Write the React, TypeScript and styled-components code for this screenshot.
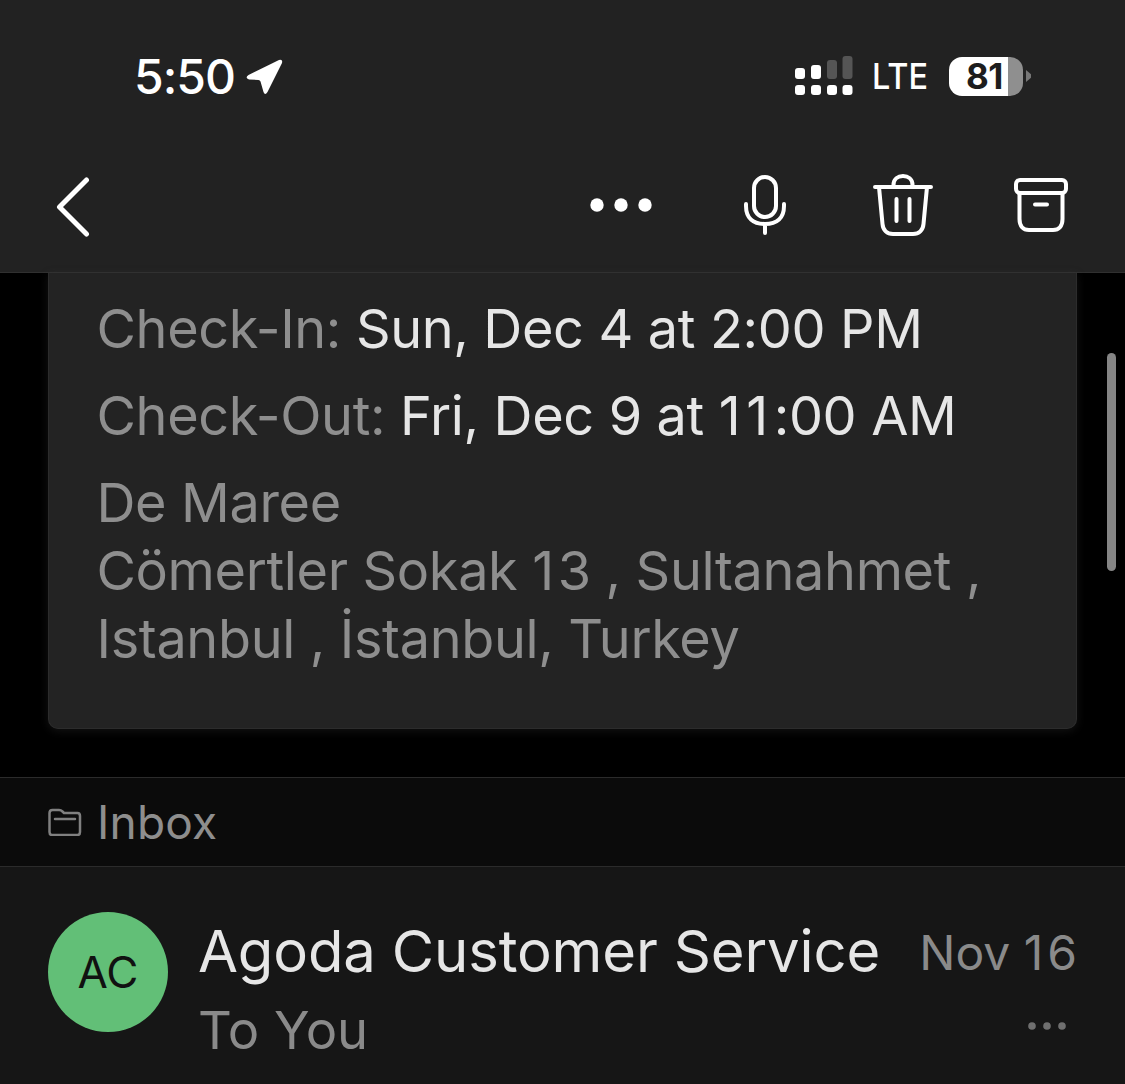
import React from 'react';
import styled, { createGlobalStyle } from 'styled-components';

const GlobalStyle = createGlobalStyle`
  html, body {
    margin: 0;
    padding: 0;
    background: #000;
    overflow: hidden;
  }
  * { box-sizing: border-box; }
`;

const Screen = styled.div`
  position: relative;
  width: 1125px;
  height: 1084px;
  overflow: hidden;
  background: #000;
  font-family: Inter, "Liberation Sans", sans-serif;
  display: flex;
  flex-direction: column;
`;

const Header = styled.header`
  height: 273px;
  flex: none;
  background: #222222;
  border-bottom: 1px solid #303030;
`;

const StatusBar = styled.div`
  height: 150px;
  padding: 51px 94px 0 134px;
  display: flex;
  justify-content: space-between;
  align-items: flex-start;
`;

const TimeGroup = styled.div`
  display: flex;
  align-items: center;
  gap: 9px;
`;

const Time = styled.span`
  color: #fff;
  font-size: 48px;
  font-weight: 500;
  line-height: 52px;
  letter-spacing: -1px;
`;

const StatusRight = styled.div`
  display: flex;
  align-items: center;
  height: 50px;
  gap: 20px;
`;

const Lte = styled.span`
  color: #fff;
  font-size: 36px;
  font-weight: 500;
  line-height: 50px;
  transform: scaleX(0.9);
  transform-origin: left center;
  width: 56px;
  margin-left: -1px;
  margin-right: 1px;
`;

const Battery = styled.div`
  display: flex;
  align-items: center;
  gap: 3px;
`;

const BatteryBody = styled.div`
  width: 74px;
  height: 39px;
  border-radius: 13px;
  background: linear-gradient(to right, #fff 0 79.7%, #8f8f8f 79.7% 100%);
  color: #1d1d1d;
  font-size: 35px;
  font-weight: 700;
  line-height: 39px;
  padding-left: 17px;
  letter-spacing: -0.5px;
  white-space: nowrap;
`;

const BatteryCap = styled.div`
  width: 5px;
  height: 12px;
  background: #777;
  clip-path: polygon(0 0, 100% 35%, 100% 65%, 0 100%);
`;

const Toolbar = styled.nav`
  height: 122px;
  padding: 0 57px 12px 56px;
  display: flex;
  align-items: center;
`;

const BackIcon = styled.svg`
  margin-top: 3px;
`;

const Actions = styled.div`
  margin-left: auto;
  display: flex;
  align-items: center;
`;

const ActionSlot = styled.div<{ $width: number }>`
  width: ${(p) => p.$width}px;
  display: flex;
  justify-content: flex-end;
  align-items: center;
`;

const Body = styled.main`
  flex: 1;
  display: flex;
  flex-direction: column;
`;

const Card = styled.section`
  margin: 0 48px;
  height: 456px;
  flex: none;
  padding: 22px 46px 0 47.5px;
  background: #232323;
  border: 1px solid #2c2c2c;
  border-top: 0;
  border-radius: 0 0 10px 10px;
  box-shadow: 0 2px 10px rgba(70, 70, 70, 0.28);
`;

const DetailLine = styled.div`
  font-size: 54px;
  font-weight: 400;
  line-height: 68px;
  margin-bottom: 19px;
  color: #8e8e8e;
  white-space: nowrap;
  letter-spacing: -0.35px;
`;

const Strong = styled.span`
  color: #e6e6e6;
`;

// the ones take more room in the reference font than in Inter
const Digits = styled.span<{ $spread: number }>`
  letter-spacing: ${(p) => p.$spread}px;
`;

const Address = styled(DetailLine)`
  margin-bottom: 0;
`;

const FolderBar = styled.div`
  margin-top: 48px;
  height: 90px;
  flex: none;
  padding-left: 48px;
  display: flex;
  align-items: center;
  gap: 15px;
  background: #0b0b0b;
  border-top: 1px solid #2b2b2b;
  border-bottom: 1px solid #2b2b2b;
`;

const FolderName = styled.span`
  color: #8e8e8e;
  font-size: 46px;
  font-weight: 400;
  line-height: 86px;
  letter-spacing: 0.2px;
`;

const SenderRow = styled.div`
  flex: 1;
  padding: 45px 48px 0;
  display: flex;
  align-items: flex-start;
  background: #161616;
`;

const Avatar = styled.div`
  width: 120px;
  height: 120px;
  flex: none;
  border-radius: 50%;
  background: #62bf77;
  color: #111;
  font-size: 44px;
  font-weight: 400;
  line-height: 120px;
  text-align: center;
`;

const SenderInfo = styled.div`
  flex: 1;
  margin-left: 30px;
`;

const SenderTop = styled.div`
  display: flex;
  justify-content: space-between;
  align-items: flex-start;
  margin-top: 3px;
`;

const SenderName = styled.span`
  color: #e6e6e6;
  font-size: 58px;
  font-weight: 400;
  line-height: 72px;
  white-space: nowrap;
  letter-spacing: -0.15px;
`;

const SentDate = styled.span`
  color: #8a8a8a;
  font-size: 48px;
  font-weight: 400;
  line-height: 75px;
  white-space: nowrap;
`;

const SenderBottom = styled.div`
  display: flex;
  justify-content: space-between;
  align-items: center;
  margin-top: 4px;
`;

const Recipient = styled.span`
  color: #8a8a8a;
  font-size: 52.5px;
  font-weight: 400;
  line-height: 72px;
`;

const MoreDots = styled.svg`
  margin-right: 11px;
  margin-top: -8px;
`;

const Scrollbar = styled.div`
  position: absolute;
  left: 1107px;
  top: 353px;
  width: 9px;
  height: 218px;
  border-radius: 5px;
  background: #858585;
`;

const signalColumns = [
  { x: 0, y: 12, h: 11, fill: '#fff' },
  { x: 16, y: 9, h: 14, fill: '#fff' },
  { x: 32, y: 4, h: 19, fill: '#555' },
  { x: 47.5, y: 0, h: 23, fill: '#555' },
];

function SignalIcon() {
  return (
    <svg width="58" height="40" viewBox="0 0 58 40">
      {signalColumns.map((c) => (
        <React.Fragment key={c.x}>
          <rect x={c.x} y={c.y} width="10" height={c.h} rx="3" fill={c.fill} />
          <rect x={c.x} y="29" width="10" height="10" rx="3" fill="#fff" />
        </React.Fragment>
      ))}
    </svg>
  );
}

function App() {
  return (
    <Screen>
      <GlobalStyle />
      <Header>
        <StatusBar>
          <TimeGroup>
            <Time>5:50</Time>
            <svg width="40" height="40" viewBox="0 0 40 40">
              <path
                d="M4.5 18 L35 3 Q39 2 38 6 L23.5 35 Q21 39 19.5 35 L16.5 24.5 Q16 23 14.5 23 L5 22.5 Q0.5 21 4.5 18 Z"
                fill="#fff"
              />
            </svg>
          </TimeGroup>
          <StatusRight>
            <SignalIcon />
            <Lte>LTE</Lte>
            <Battery>
              <BatteryBody>81</BatteryBody>
              <BatteryCap />
            </Battery>
          </StatusRight>
        </StatusBar>
        <Toolbar>
          <BackIcon width="34" height="60" viewBox="0 0 34 60" fill="none" stroke="#fff" strokeWidth="5" strokeLinecap="round" strokeLinejoin="round">
            <path d="M30.5 3 L3.5 30 L30.5 57" />
          </BackIcon>
          <Actions>
            <svg width="62" height="14" viewBox="0 0 62 14" fill="#fff">
              <circle cx="7" cy="7" r="6.7" />
              <circle cx="31" cy="7" r="6.7" />
              <circle cx="55" cy="7" r="6.7" />
            </svg>
            <ActionSlot $width={134}>
              <svg width="42" height="60" viewBox="0 0 42 60" fill="none" stroke="#fff" strokeWidth="4" strokeLinecap="round">
                <rect x="10" y="2" width="22" height="40" rx="11" />
                <path d="M2 29 V31 C2 43 9 49 21 49 C33 49 40 43 40 31 V29 M21 49 V58" />
              </svg>
            </ActionSlot>
            <ActionSlot $width={147}>
              <svg width="60" height="62" viewBox="0 0 60 62" fill="none" stroke="#fff" strokeWidth="4" strokeLinecap="round" strokeLinejoin="round">
                <path d="M2 13 H58 M20.5 13 V11 C20.5 5 25 2 30 2 C35 2 39.5 5 39.5 11 V13 M6 13 L9.5 50 C10 56 14 60 20 60 H40 C46 60 50 56 50.5 50 L54 13 M23.5 25 V47 M36.5 25 V47" />
              </svg>
            </ActionSlot>
            <ActionSlot $width={135}>
              <svg width="54" height="54" viewBox="0 0 54 54" fill="none" stroke="#fff" strokeWidth="4" strokeLinecap="round" strokeLinejoin="round">
                <rect x="2" y="2" width="50" height="13" rx="4" />
                <path d="M5.5 15 V41 C5.5 48 9 52 15 52 H39 C45 52 48.5 48 48.5 41 V15 M21 26.5 H33" />
              </svg>
            </ActionSlot>
          </Actions>
        </Toolbar>
      </Header>
      <Body>
        <Card>
          <DetailLine>
            Check-In: <Strong>Sun, Dec 4 at 2:00 PM</Strong>
          </DetailLine>
          <DetailLine>
            Check-Out: <Strong>Fri, Dec 9 at <Digits $spread={5.5}>11</Digits>:00 AM</Strong>
          </DetailLine>
          <Address>
            De Maree
            <br />
            Cömertler Sokak <Digits $spread={3.5}>1</Digits>3 , Sultanahmet ,
            <br />
            Istanbul , İstanbul, Turkey
          </Address>
        </Card>
        <FolderBar>
          <svg width="34" height="28" viewBox="0 0 34 28" fill="none" stroke="#808080" strokeWidth="2.5" strokeLinejoin="round" strokeLinecap="round">
            <path d="M1.5 24 V5 Q1.5 2 4.5 2 H11 Q13 2 14.5 3.5 L16 5 H29.5 Q32 5 32 8 V24 Q32 27 29.5 27 H4 Q1.5 27 1.5 24 Z M7 11 H27" />
          </svg>
          <FolderName>Inbox</FolderName>
        </FolderBar>
        <SenderRow>
          <Avatar>AC</Avatar>
          <SenderInfo>
            <SenderTop>
              <SenderName>Agoda Customer Service</SenderName>
              <SentDate>Nov <Digits $spread={4}>1</Digits>6</SentDate>
            </SenderTop>
            <SenderBottom>
              <Recipient>To You</Recipient>
              <MoreDots width="38" height="8" viewBox="0 0 38 8" fill="#6f6f6f">
                <circle cx="4" cy="4" r="3.8" />
                <circle cx="19" cy="4" r="3.8" />
                <circle cx="34" cy="4" r="3.8" />
              </MoreDots>
            </SenderBottom>
          </SenderInfo>
        </SenderRow>
      </Body>
      <Scrollbar />
    </Screen>
  );
}

export default App;
